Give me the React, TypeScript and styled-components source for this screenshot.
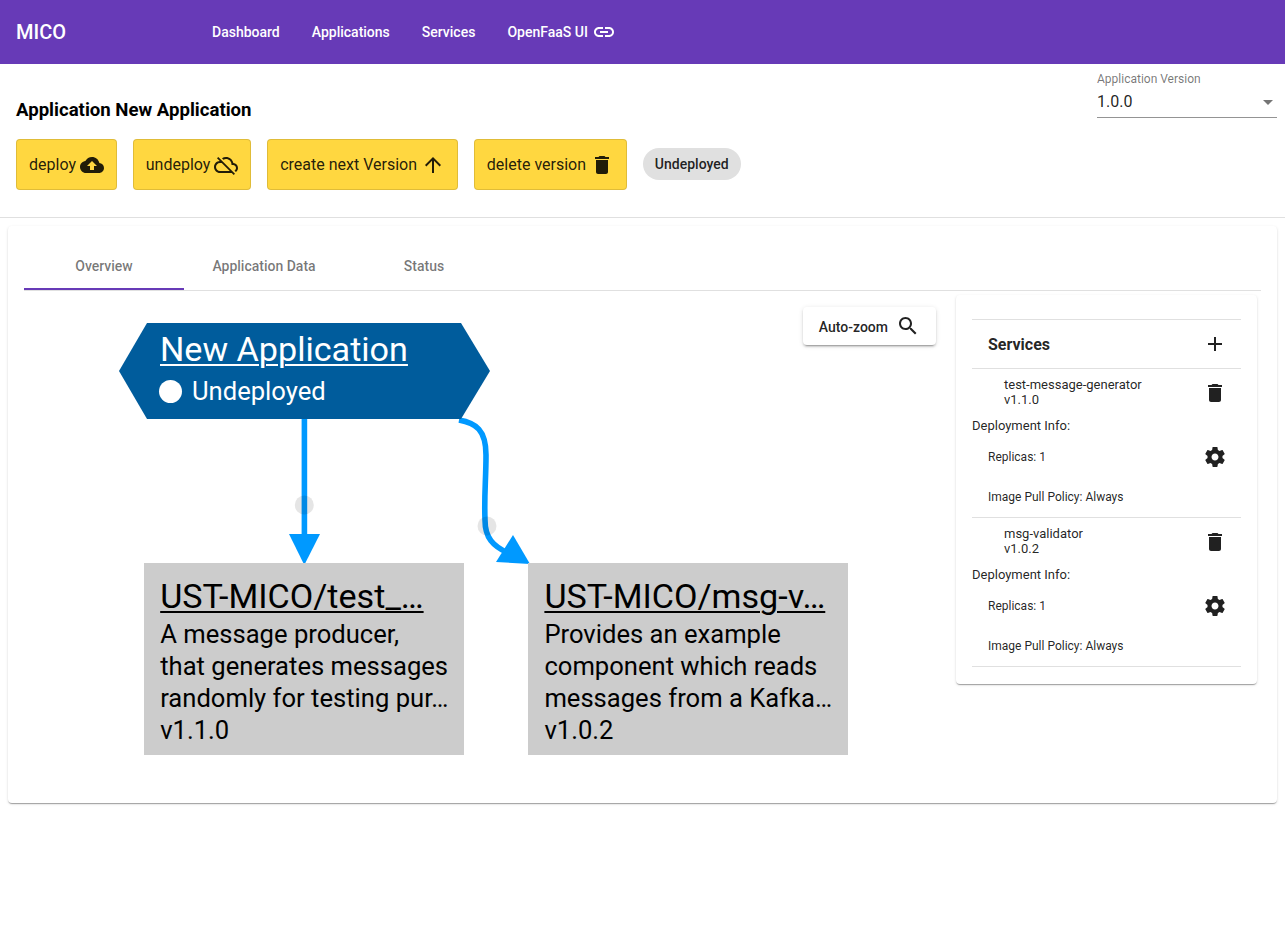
import styled, { createGlobalStyle } from 'styled-components';

const Global = createGlobalStyle`
  html, body {
    margin: 0;
    padding: 0;
    background: #fff;
    font-family: Roboto, "Helvetica Neue", sans-serif;
    color: rgba(0, 0, 0, 0.87);
  }
`;

const icons = {
  cloudUp: 'M19.35 10.04C18.67 6.59 15.64 4 12 4 9.11 4 6.6 5.64 5.35 8.04 2.34 8.36 0 10.91 0 14c0 3.31 2.69 6 6 6h13c2.76 0 5-2.24 5-5 0-2.64-2.05-4.78-4.65-4.96zM14 13v4h-4v-4H7l5-5 5 5h-3z',
  cloudOff: 'M19.35 10.04C18.67 6.59 15.64 4 12 4c-1.48 0-2.85.43-4.01 1.17l1.46 1.46C10.21 6.23 11.08 6 12 6c3.04 0 5.5 2.46 5.5 5.5v.5H19c1.66 0 3 1.34 3 3 0 1.13-.64 2.11-1.56 2.62l1.45 1.45C23.16 18.16 24 16.68 24 15c0-2.64-2.05-4.78-4.65-4.96zM3 5.27l2.75 2.74C2.56 8.15 0 10.77 0 14c0 3.31 2.69 6 6 6h11.73l2 2L21 20.73 4.27 4 3 5.27zM7.73 10l8 8H6c-2.21 0-4-1.79-4-4s1.79-4 4-4h1.73z',
  arrowUp: 'M4 12l1.41 1.41L11 7.83V20h2V7.83l5.58 5.59L20 12l-8-8-8 8z',
  trash: 'M6 19c0 1.1.9 2 2 2h8c1.1 0 2-.9 2-2V7H6v12zM19 4h-3.5l-1-1h-5l-1 1H5v2h14V4z',
  link: 'M3.9 12c0-1.71 1.39-3.1 3.1-3.1h4V7H7c-2.76 0-5 2.24-5 5s2.24 5 5 5h4v-1.9H7c-1.71 0-3.1-1.39-3.1-3.1zM8 13h8v-2H8v2zm9-6h-4v1.9h4c1.71 0 3.1 1.39 3.1 3.1s-1.39 3.1-3.1 3.1h-4V17h4c2.76 0 5-2.24 5-5s-2.24-5-5-5z',
  search: 'M15.5 14h-.79l-.28-.27C15.41 12.59 16 11.11 16 9.5 16 5.91 13.09 3 9.5 3S3 5.91 3 9.5 5.91 16 9.5 16c1.61 0 3.09-.59 4.23-1.57l.27.28v.79l5 4.99L20.49 19l-4.99-5zm-6 0C7.01 14 5 11.99 5 9.5S7.01 5 9.5 5 14 7.01 14 9.5 11.99 14 9.5 14z',
  add: 'M19 13h-6v6h-2v-6H5v-2h6V5h2v6h6v2z',
  gear: 'M19.43 12.98c.04-.32.07-.64.07-.98s-.03-.66-.07-.98l2.11-1.65c.19-.15.24-.42.12-.64l-2-3.46c-.12-.22-.39-.3-.61-.22l-2.49 1c-.52-.4-1.08-.73-1.69-.98l-.38-2.65C14.46 2.18 14.25 2 14 2h-4c-.25 0-.46.18-.49.42l-.38 2.65c-.61.25-1.17.59-1.69.98l-2.49-1c-.23-.09-.49 0-.61.22l-2 3.46c-.13.22-.07.49.12.64l2.11 1.65c-.04.32-.07.65-.07.98s.03.66.07.98l-2.11 1.65c-.19.15-.24.42-.12.64l2 3.46c.12.22.39.3.61.22l2.49-1c.52.4 1.08.73 1.69.98l.38 2.65c.03.24.24.42.49.42h4c.25 0 .46-.18.49-.42l.38-2.65c.61-.25 1.17-.59 1.69-.98l2.49 1c.23.09.49 0 .61-.22l2-3.46c.12-.22.07-.49-.12-.64l-2.11-1.65zM12 15.5c-1.93 0-3.5-1.57-3.5-3.5s1.57-3.5 3.5-3.5 3.5 1.57 3.5 3.5-1.57 3.5-3.5 3.5z',
};

const IconSvg = styled.svg`
  width: 24px;
  height: 24px;
  flex: none;
  fill: currentColor;
`;

function Icon({ name }: { name: keyof typeof icons }) {
  return (
    <IconSvg viewBox="0 0 24 24">
      <path d={icons[name]} />
    </IconSvg>
  );
}

const TopBar = styled.header`
  display: flex;
  align-items: center;
  height: 64px;
  padding: 0 16px;
  background: #673ab7;
  color: #fff;
`;

const Brand = styled.div`
  width: 196px;
  font-size: 20px;
  font-weight: 500;
`;

const Nav = styled.nav`
  display: flex;
  gap: 32px;
`;

const NavLink = styled.a`
  display: flex;
  align-items: center;
  gap: 4px;
  font-size: 14px;
  font-weight: 500;
  line-height: 36px;
`;

const AppHead = styled.section`
  display: flex;
  justify-content: space-between;
  height: 153px;
  padding: 0 8px 0 16px;
  border-bottom: 1px solid #e0e0e0;
`;

const Title = styled.h3`
  margin: 35px 0 18px;
  font-size: 18.6px;
  font-weight: 700;
  line-height: 22px;
  color: #000;
`;

const Actions = styled.div`
  display: flex;
  align-items: center;
  gap: 15.8px;
`;

const ActionButton = styled.button`
  display: flex;
  align-items: center;
  gap: 4px;
  height: 51px;
  padding: 0 12px;
  border: 1px solid rgba(0, 0, 0, 0.12);
  border-radius: 4px;
  background: #ffd740;
  font-family: inherit;
  font-size: 16px;
  color: rgba(0, 0, 0, 0.87);
`;

const Chip = styled.span`
  display: flex;
  align-items: center;
  height: 32px;
  margin-bottom: 1px;
  padding: 0 12px;
  border-radius: 16px;
  background: #e0e0e0;
  font-size: 14px;
  font-weight: 500;
`;

const VersionField = styled.div`
  width: 180px;
  height: 45px;
  margin-top: 8px;
  border-bottom: 1px solid rgba(0, 0, 0, 0.42);
`;

const VersionLabel = styled.div`
  font-size: 12px;
  line-height: 14px;
  color: rgba(0, 0, 0, 0.54);
`;

const VersionValue = styled.div`
  display: flex;
  align-items: center;
  justify-content: space-between;
  margin-top: 4px;
  font-size: 16px;
  line-height: 24px;
`;

const Caret = styled.span`
  width: 0;
  height: 0;
  margin-right: 4px;
  border-left: 5px solid transparent;
  border-right: 5px solid transparent;
  border-top: 5px solid rgba(0, 0, 0, 0.54);
`;

const Card = styled.main`
  margin: 8px;
  padding: 16px;
  border-radius: 4px;
  background: #fff;
  box-shadow: 0 2px 1px -1px rgba(0, 0, 0, 0.2), 0 1px 1px 0 rgba(0, 0, 0, 0.14), 0 1px 3px 0 rgba(0, 0, 0, 0.12);
`;

const Tabs = styled.div`
  display: flex;
  border-bottom: 1px solid #e0e0e0;
`;

const Tab = styled.div<{ $active?: boolean }>`
  display: flex;
  align-items: center;
  justify-content: center;
  box-sizing: border-box;
  width: 160px;
  height: 48px;
  padding-top: 2px;
  font-size: 14px;
  font-weight: 500;
  color: rgba(0, 0, 0, 0.54);
  border-bottom: 2px solid ${(p) => (p.$active ? '#673ab7' : 'transparent')};
`;

const Body = styled.div`
  display: flex;
  align-items: flex-start;
  padding-top: 4px;
`;

const Canvas = styled.div`
  position: relative;
  width: 932px;
  height: 492px;
  flex: none;
`;

const Edges = styled.svg`
  position: absolute;
  inset: 0;
`;

const ZoomButton = styled.button`
  position: absolute;
  top: 12px;
  right: 20px;
  display: flex;
  align-items: center;
  gap: 8px;
  height: 38px;
  padding: 0 16px;
  border: 0;
  border-radius: 4px;
  background: #fff;
  font-family: inherit;
  font-size: 14px;
  font-weight: 500;
  color: rgba(0, 0, 0, 0.87);
  box-shadow: 0 3px 1px -2px rgba(0, 0, 0, 0.2), 0 2px 2px 0 rgba(0, 0, 0, 0.14), 0 1px 5px 0 rgba(0, 0, 0, 0.12);
`;

const ZoomLabel = styled.span`
  margin-top: 2px;
`;

const AppNode = styled.div`
  position: absolute;
  left: 95px;
  top: 28px;
  box-sizing: border-box;
  width: 371px;
  height: 96px;
  padding-left: 41px;
  background: #005c9c;
  color: #fff;
  clip-path: polygon(0 50%, 28px 0, 342px 0, 100% 50%, 342px 100%, 28px 100%);
`;

const NodeTitle = styled.div`
  font-size: 34.13px;
  line-height: 52px;
  text-decoration: underline;
  text-decoration-thickness: 2px;
  text-underline-offset: 3px;
`;

const ServiceTitle = styled(NodeTitle)`
  margin-bottom: 2px;
  line-height: 39px;
`;

const AppStatus = styled.div`
  display: flex;
  align-items: center;
  gap: 10px;
  margin-left: -1px;
  font-size: 25.6px;
  line-height: 32px;
`;

const StatusDot = styled.span`
  width: 23px;
  height: 23px;
  border-radius: 50%;
  background: #fff;
`;

const ServiceNode = styled.div<{ $left: number }>`
  position: absolute;
  left: ${(p) => p.$left}px;
  top: 268px;
  box-sizing: border-box;
  width: 320px;
  height: 192px;
  padding: 14px 16px 0;
  background: #ccc;
  color: #000;
`;

const NodeLine = styled.div`
  font-size: 25.6px;
  line-height: 32px;
  white-space: nowrap;
`;

const ServicesCard = styled.aside`
  box-sizing: border-box;
  width: 301px;
  padding: 24px 16px 17px;
  border-radius: 4px;
  background: #fff;
  box-shadow: 0 2px 1px -1px rgba(0, 0, 0, 0.2), 0 1px 1px 0 rgba(0, 0, 0, 0.14), 0 1px 3px 0 rgba(0, 0, 0, 0.12);
`;

const ServicesHead = styled.div`
  display: flex;
  align-items: center;
  justify-content: space-between;
  height: 48px;
  padding: 0 14px 0 16px;
  border-top: 1px solid #e0e0e0;
  border-bottom: 1px solid #e0e0e0;
  font-size: 16px;
  font-weight: 700;
`;

const ServiceItem = styled.div`
  height: 148px;
  border-bottom: 1px solid #e0e0e0;
  font-size: 13px;
`;

const ServiceRow = styled.div`
  display: flex;
  align-items: center;
  justify-content: space-between;
  height: 48px;
  padding: 0 14px 0 32px;
  line-height: 15px;
`;

const ServiceName = styled.div`
  padding-bottom: 2px;
`;

const DeployLabel = styled.div`
  margin-top: 1px;
  line-height: 15px;
`;

const InfoRow = styled.div`
  display: flex;
  align-items: center;
  justify-content: space-between;
  height: 40px;
  padding: 0 14px 0 16px;
  font-size: 12px;
`;

const ReplicaRow = styled(InfoRow)`
  margin-top: 4px;
`;

const services = [
  { name: 'test-message-generator', version: 'v1.1.0' },
  { name: 'msg-validator', version: 'v1.0.2' },
];

const nodes = [
  {
    left: 120.2,
    title: 'UST-MICO/test_…',
    lines: ['A message producer,', 'that generates messages', 'randomly for testing pur…', 'v1.1.0'],
  },
  {
    left: 504.4,
    title: 'UST-MICO/msg-v…',
    lines: ['Provides an example', 'component which reads', 'messages from a Kafka…', 'v1.0.2'],
  },
];

export default function App() {
  return (
    <>
      <Global />
      <TopBar>
        <Brand>MICO</Brand>
        <Nav>
          <NavLink>Dashboard</NavLink>
          <NavLink>Applications</NavLink>
          <NavLink>Services</NavLink>
          <NavLink>
            OpenFaaS UI <Icon name="link" />
          </NavLink>
        </Nav>
      </TopBar>

      <AppHead>
        <div>
          <Title>Application New Application</Title>
          <Actions>
            <ActionButton>
              deploy <Icon name="cloudUp" />
            </ActionButton>
            <ActionButton>
              undeploy <Icon name="cloudOff" />
            </ActionButton>
            <ActionButton>
              create next Version <Icon name="arrowUp" />
            </ActionButton>
            <ActionButton>
              delete version <Icon name="trash" />
            </ActionButton>
            <Chip>Undeployed</Chip>
          </Actions>
        </div>
        <VersionField>
          <VersionLabel>Application Version</VersionLabel>
          <VersionValue>
            1.0.0
            <Caret />
          </VersionValue>
        </VersionField>
      </AppHead>

      <Card>
        <Tabs>
          <Tab $active>Overview</Tab>
          <Tab>Application Data</Tab>
          <Tab>Status</Tab>
        </Tabs>
        <Body>
          <Canvas>
            <Edges width="932" height="492" viewBox="24 295 932 492">
              <line x1="304.4" y1="419" x2="304.4" y2="540" stroke="#0099ff" strokeWidth="5.6" />
              <polygon points="289,534 320,534 304.3,565" fill="#0099ff" />
              <path
                d="M459 420 C476 423 486 430 486 455 C486 480 484 495 485 520 C485 538 493 546 508 553"
                fill="none"
                stroke="#0099ff"
                strokeWidth="5.6"
              />
              <polygon points="513,535 496,562 530,564" fill="#0099ff" />
              <circle cx="304.3" cy="505" r="9.5" fill="rgba(0,0,0,0.1)" />
              <circle cx="487" cy="526" r="9.5" fill="rgba(0,0,0,0.1)" />
            </Edges>
            <AppNode>
              <NodeTitle>New Application</NodeTitle>
              <AppStatus>
                <StatusDot />
                Undeployed
              </AppStatus>
            </AppNode>
            {nodes.map((node) => (
              <ServiceNode key={node.title} $left={node.left}>
                <ServiceTitle>{node.title}</ServiceTitle>
                {node.lines.map((line) => (
                  <NodeLine key={line}>{line}</NodeLine>
                ))}
              </ServiceNode>
            ))}
            <ZoomButton>
              <ZoomLabel>Auto-zoom</ZoomLabel> <Icon name="search" />
            </ZoomButton>
          </Canvas>
          <ServicesCard>
            <ServicesHead>
              Services
              <Icon name="add" />
            </ServicesHead>
            {services.map((service) => (
              <ServiceItem key={service.name}>
                <ServiceRow>
                  <ServiceName>
                    {service.name}
                    <br />
                    {service.version}
                  </ServiceName>
                  <Icon name="trash" />
                </ServiceRow>
                <DeployLabel>Deployment Info:</DeployLabel>
                <ReplicaRow>
                  Replicas: 1
                  <Icon name="gear" />
                </ReplicaRow>
                <InfoRow>Image Pull Policy: Always</InfoRow>
              </ServiceItem>
            ))}
          </ServicesCard>
        </Body>
      </Card>
    </>
  );
}
